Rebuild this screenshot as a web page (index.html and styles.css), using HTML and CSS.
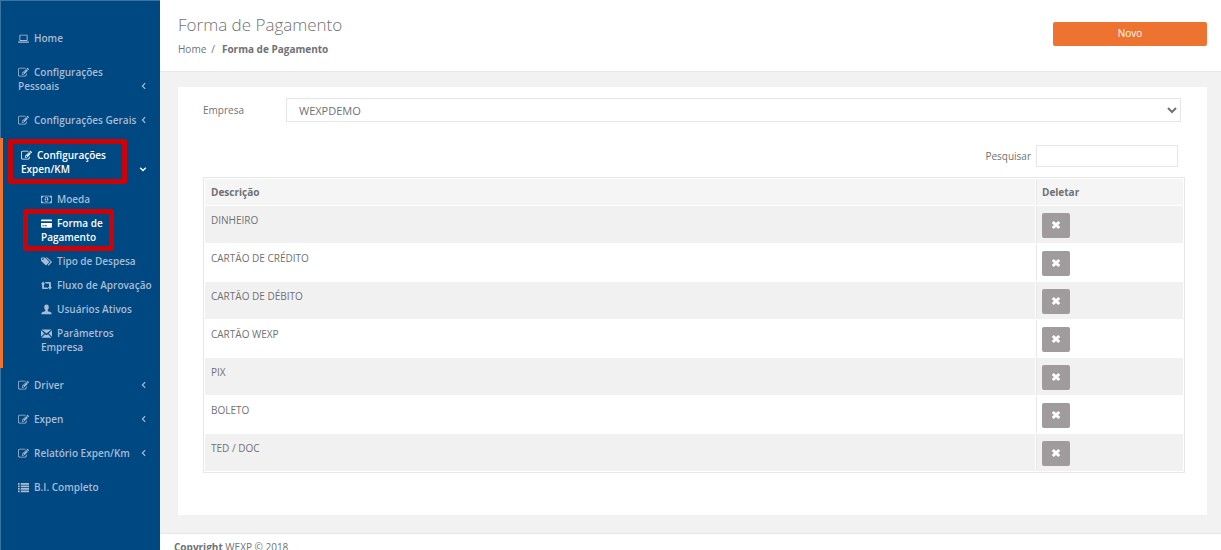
FILE: index.html
```html
<!DOCTYPE html>
<html lang="pt-BR">
<head>
  <meta charset="UTF-8" />
  <meta name="viewport" content="width=device-width, initial-scale=1.0" />
  <title>Forma de Pagamento</title>
  <link rel="stylesheet" href="styles.css">
</head>
<body>
  <svg class="sprite" aria-hidden="true">
    <symbol id="i-edit" viewBox="0 0 1792 1792"><path d="M888 1184l116-116-152-152-116 116v56h96v96h56zm440-720q-16-16-33 1l-350 350q-17 17-1 33t33-1l350-350q17-17 1-33zm80 594v190q0 119-84.5 203.5t-203.5 84.5h-832q-119 0-203.5-84.5t-84.5-203.5v-832q0-119 84.5-203.5t203.5-84.5h832q63 0 117 25 15 7 18 23 3 17-9 29l-49 49q-14 14-32 8-23-6-45-6h-832q-66 0-113 47t-47 113v832q0 66 47 113t113 47h832q66 0 113-47t47-113v-126q0-13 9-22l64-64q15-15 35-7t20 29zm-96-738l288 288-672 672h-288v-288zm444 132l-92 92-288-288 92-92q28-28 68-28t68 28l152 152q28 28 28 68t-28 68z"/></symbol>
    <symbol id="i-laptop" viewBox="0 0 20 20"><path fill-rule="evenodd" d="M4 3h12q1.500 0 1.500 1.500v8.500q0 1.500-1.500 1.500h-12q-1.500 0-1.500-1.500v-8.500q0-1.500 1.500-1.500zm.2 1.600v8.300h11.600v-8.300zM0 15.500h20v1q0 1-1.500 1h-17q-1.500 0-1.500-1z"/></symbol>
    <symbol id="i-money" viewBox="0 0 20 20"><path fill-rule="evenodd" d="M0 3h20v14h-20zM4 4.600q0 2.400-2.400 2.400v6q2.400 0 2.400 2.400h12q0-2.400 2.400-2.400v-6q-2.400 0-2.400-2.400zM10 5.500a3.500 4.500 0 0 1 0 9a3.500 4.500 0 0 1 0-9zM9.400 7l-1.600 1.500.8.800.7-.5v2.700h-1.300v1.200h4v-1.200h-1.200v-4.500z"/></symbol>
    <symbol id="i-card" viewBox="0 0 20 20"><path fill-rule="evenodd" d="M1.500 2.500h17q1.500 0 1.500 1.500v2h-20v-2q0-1.500 1.500-1.500zM0 9h20v7q0 1.500-1.500 1.500h-17q-1.500 0-1.500-1.500zM2.500 13v2h2.500v-2zm4 0v2h4v-2z"/></symbol>
    <symbol id="i-tags" viewBox="0 0 20 20"><path fill-rule="evenodd" d="M0 3.500q0-1 1-1h5q1 0 2 1l6.500 6.500q1 1 0 2l-4.500 4.500q-1 1-2 0l-7-7q-1-1-1-2zM3.300 4.300a1.400 1.400 0 1 0 .1 0z"/><path d="M8.500 2.500h1.800q1 0 2 1l7 6.500q1 1 0 2l-4.800 4.800q-1 1-2 .1l-.5-.6 4.300-4.300q1.300-1.200 0-2.500z"/></symbol>
    <symbol id="i-retweet" viewBox="0 0 20 20"><path d="M3.800 2.500l3.800 5h-2.200v6h5.600l2.200 3h-9.800q-1.400 0-1.400-1.400v-7.600h-2zM6.800 3.500h9.800q1.400 0 1.400 1.400v7.600h2l-3.800 5-3.800-5h2.200v-6h-5.600z"/></symbol>
    <symbol id="i-user" viewBox="0 0 20 20"><path d="M10 1q4.200 0 4.200 4.500 0 3.500-2 5.500v1.600q1 .8 4.800 1.900 2.500.8 2.500 4h-19q0-3.200 2.500-4 3.800-1.100 4.800-1.900v-1.600q-2-2-2-5.500 0-4.500 4.200-4.500z"/></symbol>
    <symbol id="i-mail" viewBox="0 0 20 20"><path d="M1 2.500h18l-9 7.500zM0 4l6 5.800-6 6zM20 4v11.800l-6-6zM7.300 11.200l2.700 2.200 2.700-2.200 6.300 6.300h-18z"/></symbol>
    <symbol id="i-list" viewBox="0 0 20 20"><path d="M0 2h3v3h-3zM5 2h15v3h-15zM0 6.500h3v3h-3zM5 6.500h15v3h-15zM0 11h3v3h-3zM5 11h15v3h-15zM0 15.500h3v3h-3zM5 15.500h15v3h-15z"/></symbol>
    <symbol id="i-left" viewBox="0 0 10 10"><path d="M6.500 1.500l-3.500 3.500 3.500 3.500" fill="none" stroke="currentColor" stroke-width="1.500"/></symbol>
    <symbol id="i-down" viewBox="0 0 10 10"><path d="M1.500 3.500l3.500 3.500 3.500-3.500" fill="none" stroke="currentColor" stroke-width="1.700"/></symbol>
    <symbol id="i-times" viewBox="0 0 20 20"><path d="M5.500 2l4.500 4.200 4.500-4.200 4 4-4.300 4 4.300 4-4 4-4.500-4.200-4.500 4.200-4-4 4.300-4-4.300-4z"/></symbol>
  </svg>

  <div class="wrapper">
    <nav class="sidebar">
      <ul class="menu">
        <li><a href="#"><span><svg class="icon"><use href="#i-laptop"/></svg>Home</span></a></li>
        <li><a href="#"><span><svg class="icon"><use href="#i-edit"/></svg>Configurações Pessoais</span><svg class="arrow"><use href="#i-left"/></svg></a></li>
        <li><a href="#"><span><svg class="icon"><use href="#i-edit"/></svg>Configurações Gerais</span><svg class="arrow"><use href="#i-left"/></svg></a></li>
        <li class="active">
          <a href="#" class="marked"><span><svg class="icon"><use href="#i-edit"/></svg>Configurações Expen/KM</span><svg class="arrow"><use href="#i-down"/></svg></a>
          <ul class="submenu">
            <li><a href="#"><svg class="icon"><use href="#i-money"/></svg>Moeda</a></li>
            <li><a href="#" class="current marked"><svg class="icon"><use href="#i-card"/></svg>Forma de Pagamento</a></li>
            <li><a href="#"><svg class="icon"><use href="#i-tags"/></svg>Tipo de Despesa</a></li>
            <li><a href="#"><svg class="icon"><use href="#i-retweet"/></svg>Fluxo de Aprovação</a></li>
            <li><a href="#"><svg class="icon"><use href="#i-user"/></svg>Usuários Ativos</a></li>
            <li><a href="#"><svg class="icon"><use href="#i-mail"/></svg>Parâmetros<br>Empresa</a></li>
          </ul>
        </li>
        <li><a href="#"><span><svg class="icon"><use href="#i-edit"/></svg>Driver</span><svg class="arrow"><use href="#i-left"/></svg></a></li>
        <li><a href="#"><span><svg class="icon"><use href="#i-edit"/></svg>Expen</span><svg class="arrow"><use href="#i-left"/></svg></a></li>
        <li><a href="#"><span><svg class="icon"><use href="#i-edit"/></svg>Relatório Expen/Km</span><svg class="arrow"><use href="#i-left"/></svg></a></li>
        <li><a href="#"><span><svg class="icon"><use href="#i-list"/></svg>B.I. Completo</span></a></li>
      </ul>
    </nav>

    <div class="page">
      <header class="heading">
        <div>
          <h1>Forma de Pagamento</h1>
          <div class="breadcrumb"><a href="#">Home</a><span>/</span><strong>Forma de Pagamento</strong></div>
        </div>
        <button type="button" class="btn-new">Novo</button>
      </header>

      <main class="card">
        <div class="company">
          <label for="empresa">Empresa</label>
          <select id="empresa"><option>WEXPDEMO</option></select>
        </div>
        <div class="search">
          <label for="pesquisar">Pesquisar</label>
          <input type="text" id="pesquisar" />
        </div>
        <table>
          <thead>
            <tr><th>Descrição</th><th class="col-del">Deletar</th></tr>
          </thead>
          <tbody>
            <tr><td>DINHEIRO</td><td><button type="button" class="btn-del" aria-label="Deletar"><svg><use href="#i-times"/></svg></button></td></tr>
            <tr><td>CARTÃO DE CRÉDITO</td><td><button type="button" class="btn-del" aria-label="Deletar"><svg><use href="#i-times"/></svg></button></td></tr>
            <tr><td>CARTÃO DE DÉBITO</td><td><button type="button" class="btn-del" aria-label="Deletar"><svg><use href="#i-times"/></svg></button></td></tr>
            <tr><td>CARTÃO WEXP</td><td><button type="button" class="btn-del" aria-label="Deletar"><svg><use href="#i-times"/></svg></button></td></tr>
            <tr><td>PIX</td><td><button type="button" class="btn-del" aria-label="Deletar"><svg><use href="#i-times"/></svg></button></td></tr>
            <tr><td>BOLETO</td><td><button type="button" class="btn-del" aria-label="Deletar"><svg><use href="#i-times"/></svg></button></td></tr>
            <tr><td>TED / DOC</td><td><button type="button" class="btn-del" aria-label="Deletar"><svg><use href="#i-times"/></svg></button></td></tr>
          </tbody>
        </table>
      </main>

      <footer class="footer"><strong>Copyright</strong> WEXP © 2018</footer>
    </div>
  </div>
</body>
</html>
```
FILE: styles.css
```css
* {
  box-sizing: border-box;
}
body {
  margin: 0;
  font-family: "Open Sans", sans-serif;
  font-size: 10px;
  line-height: 14px;
  color: #6f7274;
  background: #f2f2f2;
  overflow: hidden;
}
a {
  color: inherit;
  text-decoration: none;
}
ul {
  list-style: none;
  margin: 0;
  padding: 0;
}
.sprite {
  display: none;
}
svg {
  fill: currentColor;
}
.wrapper {
  display: flex;
  min-height: 100vh;
}

/* sidebar */
.sidebar {
  flex: 0 0 160px;
  padding-top: 21px;
  background: #004882;
  box-shadow: inset 1px 1px 0 #3b73a1;
  color: #a9bcd2;
  font-weight: 600;
}
.menu > li > a {
  display: flex;
  justify-content: space-between;
  align-items: flex-end;
  padding: 10px 12px 10px 18px;
}
.icon {
  width: 11px;
  height: 11px;
  margin-right: 5px;
  vertical-align: -2px;
}
.arrow {
  flex: none;
  width: 8px;
  height: 8px;
  margin-bottom: 3px;
}
.menu > .active {
  border-left: 3px solid #ee7330;
  margin-top: 1px;
  padding-bottom: 9px;
}
.active > a,
.submenu .current {
  color: #fff;
}
.menu > .active > a {
  padding-right: 13px;
}
.submenu {
  padding-top: 1px;
}
.submenu a {
  display: block;
  padding: 5px 0 5px 38px;
}
.submenu .current {
  padding-right: 45px;
}
/* red frames drawn over the highlighted links */
.marked {
  position: relative;
}
.marked::after {
  content: "";
  position: absolute;
  inset: 1px 33px 2px 5px;
  border: 5px solid #cc0209;
  border-radius: 2px;
}
.submenu .marked::after {
  inset: -2px 46px -2px 20px;
}

/* content */
.page {
  flex: 1;
  min-width: 0;
}
.heading {
  display: flex;
  justify-content: space-between;
  align-items: flex-start;
  height: 72px;
  padding: 14px 14px 0 18px;
  background: #fff;
  border-bottom: 1px solid #e7e7e7;
}
h1 {
  margin: 0 0 6px;
  font-size: 17px;
  line-height: 22px;
  font-weight: 300;
}
.breadcrumb {
  display: flex;
  gap: 5px;
}
.breadcrumb strong {
  margin-left: 2px;
}
.btn-new {
  width: 154px;
  height: 24px;
  margin-top: 8px;
  padding: 0 0 2px;
  border: 0;
  border-radius: 2px;
  background: #ee7330;
  color: #fff;
  font: inherit;
}
.card {
  margin: 15px 14px 18px 18px;
  padding: 11px 22px 42px 25px;
  background: #fff;
}
.company {
  display: flex;
  align-items: center;
  margin-right: 4px;
}
.company label {
  width: 83px;
}
select {
  flex: 1;
  height: 24px;
  padding: 0 0 0 8px;
  border: 1px solid #e5e6e7;
  border-radius: 0;
  background: #fff;
  color: inherit;
  font: inherit;
  font-size: 11px;
}
.search {
  display: flex;
  justify-content: flex-end;
  align-items: center;
  gap: 5px;
  margin: 23px 7px 10px 0;
}
input {
  width: 142px;
  height: 22px;
  border: 1px solid #e5e6e7;
  font: inherit;
}
table {
  width: 100%;
  border: 1px solid #e7e7e7;
  border-collapse: separate;
  border-spacing: 1px;
}
th,
td {
  padding: 6px;
  text-align: left;
  vertical-align: top;
}
td {
  padding: 7px 6px 5px;
}
th {
  background: #f5f5f6;
}
.col-del {
  width: 147px;
}
th + th,
td + td {
  border-left: 1px solid #e7e7e7;
  padding-left: 5px;
}
tbody tr:nth-child(odd) td {
  background: #f1f1f1;
}
.btn-del {
  display: block;
  width: 28px;
  height: 25px;
  padding: 0 0 2px;
  border: 0;
  border-radius: 2px;
  background: #a09c9d;
  color: #fff;
}
.btn-del svg {
  display: block;
  width: 10px;
  height: 10px;
  margin: 0 auto;
}
.footer {
  height: 40px;
  padding: 6px 14px;
  background: #fff;
  border-top: 1px solid #e7e7e7;
}
```
